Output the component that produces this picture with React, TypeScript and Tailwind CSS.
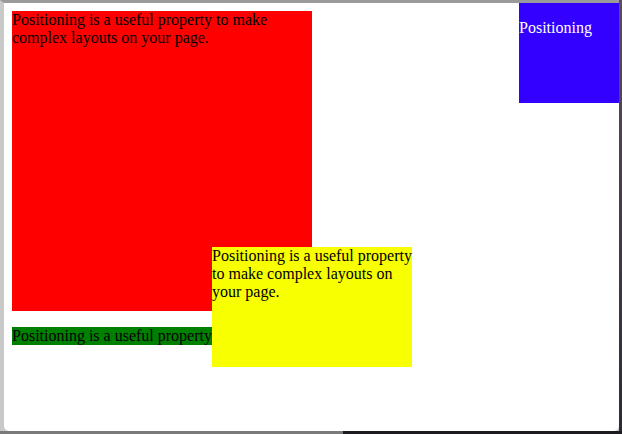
const serif = "font-['Liberation_Serif',_'Times_New_Roman',_serif] text-[16px] leading-[18px]"

export default function App() {
    return (
        <div className="w-[622px] h-[434px] overflow-hidden bg-[#2b2a30] flex flex-col">
            {/* window */}
            <div className="flex h-[431px]">
                <div className="w-[619px] h-[431px] border-t-[3px] border-t-[#9a9a9a] border-l-4 border-l-[#c9c9c9] bg-[#c9c9c9]">
                    <div className={`relative w-full h-[428px] bg-white rounded-b-[5px] p-2 text-black ${serif}`}>
                        <div className="w-[300px] h-[300px] bg-[#ff0000]">
                            Positioning is a useful property to make complex layouts on your page.
                        </div>
                        <p className="mt-4 w-[200px] h-[18px] bg-[#008000] whitespace-nowrap overflow-hidden">
                            Positioning is a useful property
                        </p>

                        {/* overlapping boxes */}
                        <div className="absolute left-[208px] top-[244px] w-[200px] h-[120px] bg-[#f8ff00]">
                            Positioning is a useful property to make complex layouts on your page.
                        </div>
                        <div className="absolute right-0 top-0 w-[100px] h-[100px] bg-[#3300ff] text-white">
                            <p className="mt-4">Positioning</p>
                        </div>
                    </div>
                </div>
                <div className="flex-1 bg-gradient-to-b from-[#5b4d5c] to-[#2e2c33]" />
            </div>
            <div className="flex h-[3px]">
                <div className="w-[343px] bg-[#7a7a7a]" />
                <div className="flex-1 bg-[#1c1b20]" />
            </div>
        </div>
    )
}
